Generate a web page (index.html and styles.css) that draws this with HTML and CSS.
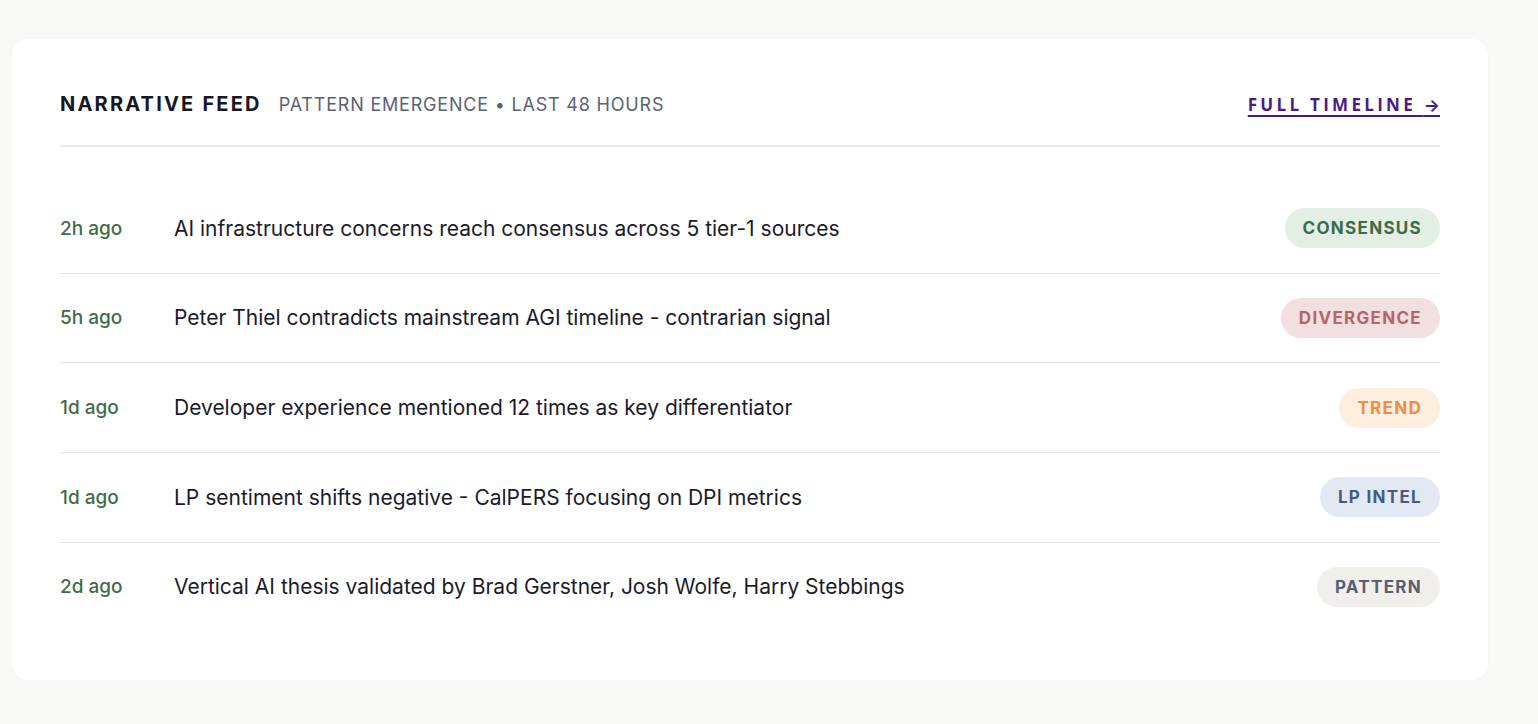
FILE: index.html
```html
<!DOCTYPE html>
<html lang="en">
<head>
<meta charset="utf-8">
<title>Narrative Feed</title>
<link rel="stylesheet" href="styles.css">
</head>
<body>
<section class="card">
  <header class="card-head">
    <div class="titles">
      <h2 class="title">NARRATIVE FEED</h2>
      <span class="subtitle">PATTERN EMERGENCE • LAST 48 HOURS</span>
    </div>
    <a class="link" href="#">FULL TIMELINE <span class="arrow">→</span></a>
  </header>
  <ul class="feed">
    <li class="row">
      <span class="time">2h ago</span>
      <span class="desc">AI infrastructure concerns reach consensus across 5 tier-1 sources</span>
      <span class="pill pill-consensus">CONSENSUS</span>
    </li>
    <li class="row">
      <span class="time">5h ago</span>
      <span class="desc">Peter Thiel contradicts mainstream AGI timeline - contrarian signal</span>
      <span class="pill pill-divergence">DIVERGENCE</span>
    </li>
    <li class="row">
      <span class="time">1d ago</span>
      <span class="desc">Developer experience mentioned 12 times as key differentiator</span>
      <span class="pill pill-trend">TREND</span>
    </li>
    <li class="row">
      <span class="time">1d ago</span>
      <span class="desc">LP sentiment shifts negative - CalPERS focusing on DPI metrics</span>
      <span class="pill pill-lp">LP INTEL</span>
    </li>
    <li class="row">
      <span class="time">2d ago</span>
      <span class="desc">Vertical AI thesis validated by Brad Gerstner, Josh Wolfe, Harry Stebbings</span>
      <span class="pill pill-pattern">PATTERN</span>
    </li>
  </ul>
</section>
</body>
</html>
```
FILE: styles.css
```css
* { box-sizing: border-box; }
html, body { margin: 0; padding: 0; }
body {
  background: #f8f8f6;
  font-family: "Inter", "Noto Sans", sans-serif;
  color: #1b1b2b;
  padding: 39px 50px 0 12px;
}
.card {
  background: #ffffff;
  border-radius: 16px;
  padding: 48px 48px 49px 48px;
  box-shadow: 0 1px 3px rgba(0,0,0,0.03);
}
.card-head {
  display: flex;
  align-items: center;
  justify-content: space-between;
  height: 34px;
  box-sizing: content-box;
  padding-bottom: 24px;
  border-bottom: 2px solid #e4ede6;
}
.titles {
  display: flex;
  align-items: baseline;
  gap: 17px;
}
.title {
  margin: 0;
  font-size: 20px;
  font-weight: 700;
  letter-spacing: 2.2px;
  color: #171727;
}
.subtitle {
  font-size: 18px;
  letter-spacing: 0.8px;
  color: #5b6173;
}
.link {
  font-family: "Open Sans", "Noto Sans", sans-serif;
  font-size: 17px;
  font-weight: 700;
  letter-spacing: 3.3px;
  color: #4b1a86;
  text-decoration: underline;
  text-underline-offset: 4px;
  text-decoration-thickness: 2px;
}
.arrow {
  font-family: "Inter", sans-serif;
  font-weight: 700;
  letter-spacing: 0;
}
.feed {
  list-style: none;
  margin: 37px 0 0 0;
  padding: 0;
}
.row {
  display: flex;
  align-items: center;
  padding: 24.33px 0;
  border-bottom: 1px solid #e4e4e8;
}
.row:last-child { border-bottom: none; }
.time {
  width: 114px;
  flex: none;
  font-size: 19px;
  font-weight: 500;
  color: #3f6c48;
}
.desc {
  flex: 1;
  font-size: 21px;
  color: #1b1b2b;
}
.pill {
  flex: none;
  height: 40px;
  line-height: 40px;
  padding: 0 18px;
  border-radius: 20px;
  font-size: 17px;
  font-weight: 700;
  letter-spacing: 1.3px;
}
.pill-consensus { background: #e3eee4; color: #3d6b45; }
.pill-divergence { background: #f2dfe0; color: #b86468; }
.pill-trend { background: #fdeedd; color: #ee8e45; }
.pill-lp { background: #e3e9f2; color: #4a5a7e; }
.pill-pattern { background: #f1efeb; color: #585f70; }
```
